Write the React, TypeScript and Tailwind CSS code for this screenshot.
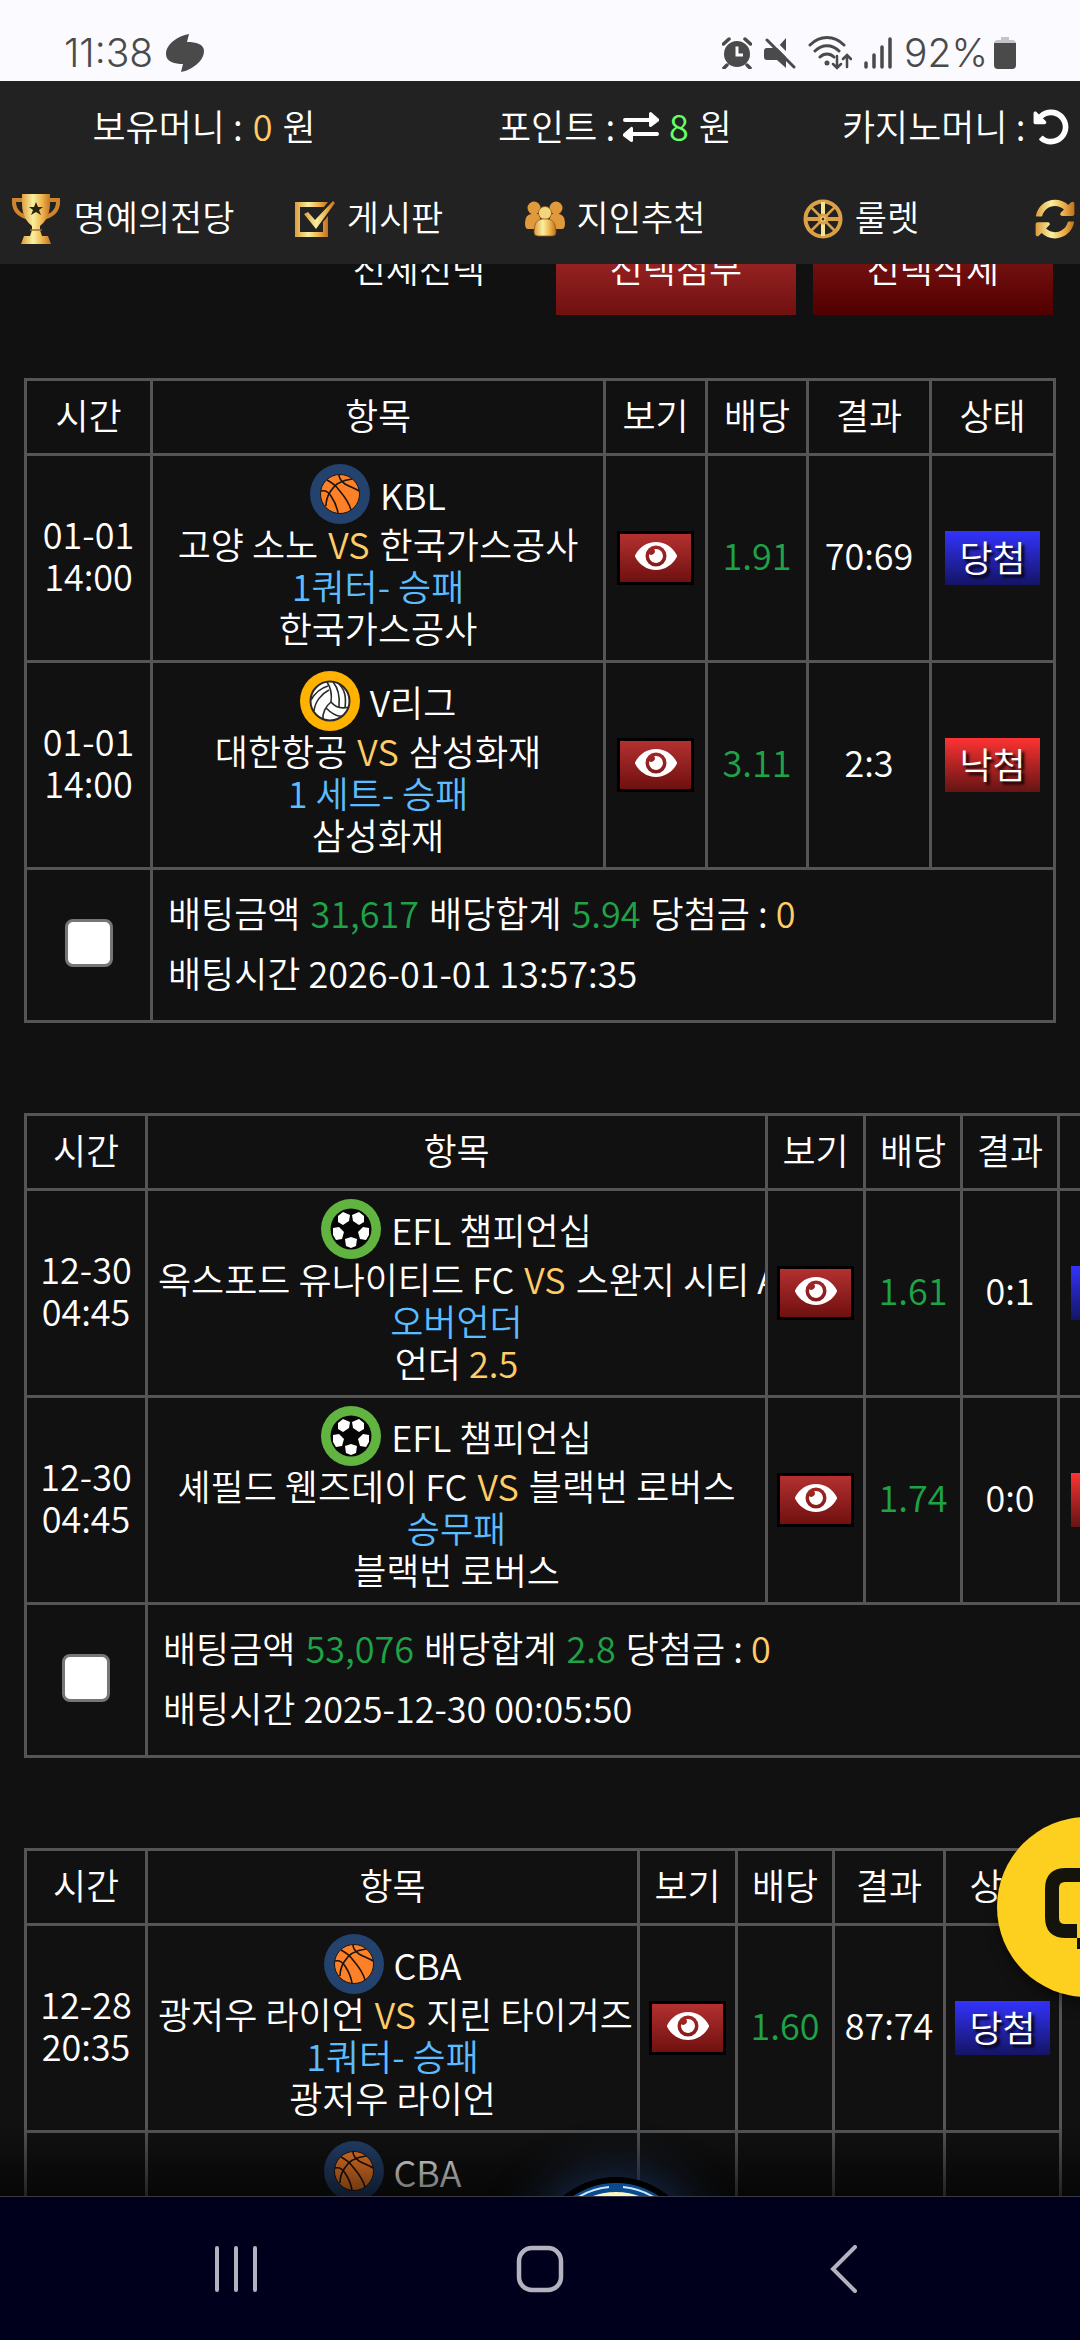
import { ReactNode } from 'react';
import { FaEye, FaUndoAlt, FaSyncAlt } from 'react-icons/fa';

type Sport = 'basketball' | 'volleyball' | 'soccer';

interface Bet {
  date: string;
  time: string;
  sport: Sport;
  league: string;
  home: string;
  away: string;
  market: string;
  pick: string;
  line?: string;
  odds: string;
  score: string;
  won: boolean;
}

interface Slip {
  id: string;
  cols: string[];
  width: string;
  bets: Bet[];
  amount: string;
  total: string;
  placedAt: string;
}

const slips: Slip[] = [
  {
    id: 'slip-1',
    width: 'w-full',
    cols: ['w-[126px]', '', 'w-[102px]', 'w-[101px]', 'w-[123px]', 'w-[124px]'],
    bets: [
      { date: '01-01', time: '14:00', sport: 'basketball', league: 'KBL', home: '고양 소노', away: '한국가스공사', market: '1쿼터- 승패', pick: '한국가스공사', odds: '1.91', score: '70:69', won: true },
      { date: '01-01', time: '14:00', sport: 'volleyball', league: 'V리그', home: '대한항공', away: '삼성화재', market: '1 세트- 승패', pick: '삼성화재', odds: '3.11', score: '2:3', won: false },
    ],
    amount: '31,617',
    total: '5.94',
    placedAt: '2026-01-01 13:57:35',
  },
  {
    id: 'slip-2',
    width: 'w-[1156px]',
    cols: ['w-[121px]', '', 'w-[98px]', 'w-[97px]', 'w-[97px]', 'w-[120px]'],
    bets: [
      { date: '12-30', time: '04:45', sport: 'soccer', league: 'EFL 챔피언십', home: '옥스포드 유나이티드 FC', away: '스완지 시티 AFC', market: '오버언더', pick: '언더', line: '2.5', odds: '1.61', score: '0:1', won: true },
      { date: '12-30', time: '04:45', sport: 'soccer', league: 'EFL 챔피언십', home: '셰필드 웬즈데이 FC', away: '블랙번 로버스', market: '승무패', pick: '블랙번 로버스', odds: '1.74', score: '0:0', won: false },
    ],
    amount: '53,076',
    total: '2.8',
    placedAt: '2025-12-30 00:05:50',
  },
  {
    id: 'slip-3',
    width: 'w-[1038px]',
    cols: ['w-[121px]', '', 'w-[98px]', 'w-[97px]', 'w-[111px]', 'w-[116px]'],
    bets: [
      { date: '12-28', time: '20:35', sport: 'basketball', league: 'CBA', home: '광저우 라이언', away: '지린 타이거즈', market: '1쿼터- 승패', pick: '광저우 라이언', odds: '1.60', score: '87:74', won: true },
      { date: '12-28', time: '20:35', sport: 'basketball', league: 'CBA', home: '광저우 라이언', away: '지린 타이거즈', market: '승패', pick: '광저우 라이언', odds: '1.60', score: '87:74', won: true },
    ],
    amount: '30,000',
    total: '2.56',
    placedAt: '2025-12-28 19:40:12',
  },
];

const headings = ['시간', '항목', '보기', '배당', '결과', '상태'];

const GoldGradient = () => (
  <svg width="0" height="0" className="absolute" aria-hidden="true">
    <defs>
      <linearGradient id="gold" x1="0" y1="0" x2="1" y2="0">
        <stop offset="0" stopColor="#dd9a3a" />
        <stop offset="0.4" stopColor="#f9f0a0" />
        <stop offset="0.7" stopColor="#efb54e" />
        <stop offset="1" stopColor="#c0701c" />
      </linearGradient>
    </defs>
  </svg>
);

const TrophyIcon = () => (
  <svg viewBox="0 0 50 50" className="size-[50px] shrink-0">
    <path d="M12 6H3q-1 14 15 18M38 6h9q1 14-15 18" fill="none" stroke="#d0852c" strokeWidth="4" />
    <path d="M11 0h28v10c0 11-5 18-10 22v4l2 6h6l3 8H10l3-8h6l2-6v-4C16 28 11 21 11 10z" fill="url(#gold)" />
    <path d="M25 8l2 5h5l-4 3 2 5-5-3-5 3 2-5-4-3h5z" fill="#2b2410" />
    <path d="M19 36h12" stroke="#a06a20" strokeWidth="1.500" />
  </svg>
);

const BoardIcon = () => (
  <svg viewBox="0 0 40 38" className="h-[38px] w-10 shrink-0" fill="url(#gold)">
    <path d="M0 2h33l-4 5H5v25h23V22l5-6v21H0z" />
    <path d="M9 14l4-2 7 8L38 1l2 2-19 26z" />
  </svg>
);

const FriendsIcon = () => (
  <svg viewBox="0 0 40 36" className="h-9 w-10 shrink-0">
    <g fill="#e09a3c">
      <circle cx="9" cy="7" r="6.500" />
      <circle cx="31" cy="7" r="6.500" />
      <path d="M0 22q0-8 6-9h8l4 15H3q-3 0-3-6zM40 22q0-8-6-9h-8l-4 15h15q3 0 3-6z" />
    </g>
    <circle cx="20" cy="12" r="6.500" fill="#f3d67c" stroke="#8a5a1c" strokeWidth="0.800" />
    <path d="M9 31q0-12 8-13h6q8 1 8 13 0 4-4 4H13q-4 0-4-4z" fill="url(#gold)" stroke="#8a5a1c" strokeWidth="0.800" />
  </svg>
);

const WheelIcon = () => (
  <svg viewBox="0 0 40 40" className="size-10 shrink-0" fill="none" stroke="#dba048">
    <circle cx="20" cy="20" r="17.500" strokeWidth="4" />
    <path d="M20 3v34" stroke="#f6e690" strokeWidth="4" />
    <path d="M3 20h34" strokeWidth="4" />
    <path d="M8 8l24 24M32 8L8 32" strokeWidth="2.500" />
    <circle cx="20" cy="20" r="4" fill="#f6e690" strokeWidth="3" />
    <circle cx="20" cy="20" r="1.500" fill="#4a3414" stroke="none" />
  </svg>
);

const SportIcon = ({ sport }: { sport: Sport }) => {
  if (sport === 'basketball') {
    return (
      <svg viewBox="0 0 60 60" className="size-15 shrink-0">
        <circle cx="30" cy="30" r="30" fill="#24426e" />
        <circle cx="30" cy="30" r="19.500" fill="#ff8127" stroke="#1a1410" strokeWidth="1" />
        <g fill="none" stroke="#1a1410" strokeWidth="1.600">
          <path d="M29 11c0 4 2 6 6 9 5 3 10 4 14 7" />
          <path d="M42 15c-9 1-17 4-22 13-3 5-4 10-4 14" />
          <path d="M17 16c4 2 9 6 12 10 6 7 10 12 12 20" />
          <path d="M11 27c4-1 7 0 10 5 4 6 6 11 7 17" />
        </g>
      </svg>
    );
  }
  if (sport === 'volleyball') {
    return (
      <svg viewBox="0 0 60 60" className="size-15 shrink-0">
        <circle cx="30" cy="30" r="30" fill="#ffb200" />
        <circle cx="30" cy="30" r="19.500" fill="#fff" stroke="#2a2a2a" strokeWidth="2" />
        <g fill="none" stroke="#2a2a2a" strokeWidth="1.600">
          <path d="M27 11c4 6 5 13 4 20" />
          <path d="M33 11c6 7 7 15 6 25" />
          <path d="M39 13c7 7 7 15 6 24" />
          <path d="M31 31c5 6 11 7 18 5" />
          <path d="M26 37c6 6 12 9 17 8" />
          <path d="M31 31c-5 4-9 11-8 18" />
          <path d="M29 19c-8 4-14 12-15 21" />
          <path d="M28 15c-7 2-13 7-17 14" />
        </g>
      </svg>
    );
  }
  return (
    <svg viewBox="0 0 60 60" className="size-15 shrink-0">
      <circle cx="30" cy="30" r="30" fill="#62b441" />
      <circle cx="30" cy="30" r="20.500" fill="#050505" />
      <g fill="#fff">
        <path d="M17 17l5-4 7 3-1 6-6 4-5-3z" />
        <path d="M43 17l-5-4-7 3 1 6 6 4 5-3z" />
        <path d="M12 29l6-1 5 5-2 7-6 1-3-5z" />
        <path d="M48 29l-6-1-5 5 2 7 6 1 3-5z" />
        <path d="M24 40l6-2 6 2-1 7-5 2-5-2z" />
      </g>
    </svg>
  );
};

const StatusBar = () => (
  <div className="flex h-[81px] shrink-0 items-center justify-between bg-[#fafaff] px-16 pt-6 font-[Inter,sans-serif] text-[39px] font-light text-[#4a4a4a]">
    <div className="flex items-center gap-3">
      <span>11:38</span>
      <svg viewBox="0 0 40 40" className="size-10" fill="#4a4a4a">
        <path d="M24 1C13 3 1 11 1 21c0 8 9 10 17 10l-2 8c11-2 23-11 23-21 0-7-8-9-17-9z" />
      </svg>
    </div>
    <div className="flex items-center gap-4">
      <svg viewBox="0 0 30 32" className="h-8 w-[30px]">
        <circle cx="15" cy="17" r="13" fill="#4a4a4a" />
        <path d="M1.500 7L7 2M28.500 7L23 2M5 28l-3 3M25 28l3 3" stroke="#4a4a4a" strokeWidth="3.500" strokeLinecap="round" />
        <path d="M15 9.500V18h6" fill="none" stroke="#fafaff" strokeWidth="3" />
      </svg>
      <svg viewBox="0 0 32 32" className="-ml-1 size-8">
        <path d="M22 1v30l-9-8H3q-3 0-3-3v-6q0-3 3-3h10z" fill="#4a4a4a" />
        <path d="M5 0l27 27" stroke="#fafaff" strokeWidth="4" />
        <path d="M3 3l27 27" stroke="#4a4a4a" strokeWidth="3" strokeLinecap="round" />
      </svg>
      <svg viewBox="0 0 44 34" className="-ml-1 h-[34px] w-11" fill="none" stroke="#4a4a4a" strokeWidth="3" strokeLinecap="round">
        <path d="M2 9c10-10 24-10 34 0M7 15c7-7 17-7 24 0M12 21c4-4 10-4 14 0" />
        <circle cx="19" cy="27" r="1" fill="#4a4a4a" />
        <path d="M29 20v11M25 28l4 4 4-4M39 31V20M35 23l4-4 4 4" strokeWidth="2.500" />
      </svg>
      <svg viewBox="0 0 28 32" className="-ml-1 h-8 w-7" stroke="#4a4a4a" strokeWidth="3.500" strokeLinecap="round">
        <path d="M2 26v4M10 18v12M18 10v20M26 2v28" />
      </svg>
      <div className="-ml-1 flex items-center gap-1.5">
        <span>92%</span>
        <svg viewBox="0 0 22 32" className="h-8 w-[22px]">
          <path d="M7 0h8v3h3q4 0 4 4H0q0-4 4-4h3z" fill="#c4c4c8" />
          <path d="M0 6h22v22q0 4-4 4H4q-4 0-4-4z" fill="#4a4a4a" />
        </svg>
      </div>
    </div>
  </div>
);

const MenuItem = ({ label, children }: { label: string; children: ReactNode }) => (
  <a href="#" className="flex w-[246px] shrink-0 items-center justify-center gap-3">
    {children}
    <span className="pb-1.5">{label}</span>
  </a>
);

const Header = () => (
  <header className="shrink-0 overflow-hidden bg-[#222] whitespace-nowrap">
    <div className="flex h-[92px] items-center">
      <div className="w-[408px] shrink-0 pb-1 text-center">
        보유머니 : <span className="mx-0.5 text-[#ffcc66]">0</span> 원
      </div>
      <div className="flex w-[414px] shrink-0 items-center justify-center">
        <span className="pb-1">포인트 :</span>
        <button type="button" aria-label="포인트 전환" className="mx-2">
          <svg viewBox="0 0 36 30" className="h-[30px] w-9" fill="#fff">
            <path d="M2 6h24V1q1-1 2-1l8 7q1 1 0 2l-8 6q-2 0-2-1v-4H2Q0 10 0 8t2-2zM34 20H10v-4q-1-2-2-1l-8 7q-1 1 0 2l8 6q2 0 2-1v-5h24q2 0 2-2t-2-2z" />
          </svg>
        </button>
        <span className="pb-1">
          <span className="mx-0.5 text-[#66ff66]">8</span> 원
        </span>
      </div>
      <div className="flex shrink-0 items-center pl-5">
        <span className="pb-1">카지노머니 :</span>
        <button type="button" aria-label="카지노머니 새로고침" className="mx-2">
          <FaUndoAlt className="size-9" />
        </button>
        <span className="pb-1 pl-3">
          <span className="mx-0.5 text-[#ffcc66]">0</span> 원
        </span>
      </div>
    </div>
    <nav className="flex h-[91px] items-center text-[35px]">
      <MenuItem label="명예의전당">
        <TrophyIcon />
      </MenuItem>
      <MenuItem label="게시판">
        <BoardIcon />
      </MenuItem>
      <MenuItem label="지인추천">
        <FriendsIcon />
      </MenuItem>
      <MenuItem label="룰렛">
        <WheelIcon />
      </MenuItem>
      <a href="#" aria-label="새로고침" className="shrink-0 pl-[51px]">
        <FaSyncAlt className="size-10" fill="url(#gold)" />
      </a>
    </nav>
  </header>
);

const BetTable = ({ slip }: { slip: Slip }) => (
  <table className={`${slip.width} table-fixed border-collapse text-center whitespace-nowrap [&_td]:border-3 [&_td]:border-[#555] [&_th]:border-3 [&_th]:border-[#555]`}>
    <colgroup>
      {slip.cols.map((c, i) => (
        <col key={i} className={c} />
      ))}
    </colgroup>
    <thead>
      <tr className="h-[75px]">
        {headings.map((h) => (
          <th key={h} className="p-0 pb-1.5 font-[350]">{h}</th>
        ))}
      </tr>
    </thead>
    <tbody>
      {slip.bets.map((bet, i) => (
        <tr key={i} className="h-[207px]">
          <td className="p-0 pb-2">
            {bet.date}
            <br />
            {bet.time}
          </td>
          <td className="overflow-hidden px-[10px] pt-[9px] pb-0 align-top">
            <div className="flex h-[57px] items-center justify-center gap-2.5">
              <SportIcon sport={bet.sport} />
              <span>{bet.league}</span>
            </div>
            <div>
              {bet.home} <span className="mx-0.5 text-[#ffcc66]">VS</span> {bet.away}
            </div>
            <div className="text-[#5bbcff]">{bet.market}</div>
            <div>
              {bet.pick} {bet.line && <span className="text-[#ffcc66]">{bet.line}</span>}
            </div>
          </td>
          <td className="p-0">
            <button type="button" aria-label="경기 보기" className="inline-flex h-[54px] w-[77px] items-center justify-center border-3 border-black bg-linear-to-b from-[#b43030] to-[#701010] pb-1 align-middle">
              <FaEye className="size-[42px]" />
            </button>
          </td>
          <td className="p-0 pb-2 text-[#1fa347]">{bet.odds}</td>
          <td className="p-0 pb-2">{bet.score}</td>
          <td className="p-0">
            <span className={`inline-flex h-[54px] w-[95px] items-center justify-center bg-linear-to-b pb-1 align-middle text-shadow-[3px_3px_3px_#000] ${bet.won ? 'from-[#3333ff] to-[#141466]' : 'from-[#ff3333] to-[#661414]'}`}>
              {bet.won ? '당첨' : '낙첨'}
            </span>
          </td>
        </tr>
      ))}
      <tr className="h-[153px]">
        <td className="p-0 pb-2">
          <input type="checkbox" aria-label="배팅 선택" className="size-12 appearance-none rounded-lg border-3 border-[#767676] bg-white align-middle" />
        </td>
        <td colSpan={5} className="px-[15px] pt-0 pb-1.5 text-left leading-[60px]">
          <div>
            배팅금액 <span className="mx-0.5 text-[#1fa347]">{slip.amount}</span> 배당합계 <span className="mx-0.5 text-[#1fa347]">{slip.total}</span> 당첨금 : <span className="text-[#ffcc66]">0</span>
          </div>
          <div>배팅시간 {slip.placedAt}</div>
        </td>
      </tr>
    </tbody>
  </table>
);

const SystemNav = () => (
  <div className="flex h-36 shrink-0 items-center border-t border-[#3a3a44] bg-[#00001c] px-[84px]">
    <button type="button" aria-label="최근 앱" className="flex flex-1 justify-center">
      <svg viewBox="0 0 42 46" className="h-[46px] w-[42px]" stroke="#b4b2bf" strokeWidth="4" strokeLinecap="round">
        <path d="M2 2v42M21 2v42M40 2v42" />
      </svg>
    </button>
    <button type="button" aria-label="홈" className="flex flex-1 justify-center">
      <svg viewBox="0 0 48 48" className="size-12" fill="none" stroke="#b4b2bf" strokeWidth="4.500">
        <rect x="3" y="3" width="42" height="42" rx="13" />
      </svg>
    </button>
    <button type="button" aria-label="뒤로" className="flex flex-1 justify-center">
      <svg viewBox="0 0 28 48" className="h-12 w-7" fill="none" stroke="#b4b2bf" strokeWidth="4" strokeLinecap="round">
        <path d="M25 2L3 24l22 22" />
      </svg>
    </button>
  </div>
);

const App = () => {
  return (
    <div className="flex h-screen flex-col overflow-hidden bg-[#111] font-['Noto_Sans_CJK_KR',sans-serif] text-[36px] leading-[42px] font-[350] text-white">
      <GoldGradient />
      <StatusBar />
      <Header />

      <main className="relative min-h-0 flex-1 overflow-hidden px-6">
        {/* Bulk actions, scrolled under the header */}
        <div className="-mt-[42px] flex justify-end gap-[17px] pr-[3px]">
          <button type="button" className="h-[93px] w-60 pb-1">전체선택</button>
          <button type="button" className="h-[93px] w-60 bg-linear-to-b from-[#b43030] to-[#701010] pb-1">선택첨부</button>
          <button type="button" className="h-[93px] w-60 bg-linear-to-b from-[#902020] to-[#500000] pb-1">선택삭제</button>
        </div>

        <div className="mt-[63px] flex flex-col gap-[90px]">
          {slips.map((slip) => (
            <BetTable key={slip.id} slip={slip} />
          ))}
        </div>

        {/* Fade above the system bar */}
        <div className="pointer-events-none absolute inset-x-0 bottom-0 h-18 bg-linear-to-b from-transparent to-black/60" />

        <button type="button" aria-label="메뉴" className="absolute -bottom-[147px] left-[57%] size-[166px] -translate-x-1/2 rounded-full border-6 border-black bg-[#0b4a8c] shadow-[0_0_50px_#1c3460]">
          <svg viewBox="0 0 154 154" className="size-full">
            <circle cx="77" cy="77" r="68" fill="#fdf8c0" />
            <path d="M6 60A73 73 0 0 1 70 4M84 4A73 73 0 0 1 148 60" fill="none" stroke="#cfeaff" strokeWidth="2" />
          </svg>
        </button>

        <button type="button" aria-label="상담 채팅" className="absolute right-[-97px] bottom-[199px] size-[180px] rounded-full bg-[#fdd020] pl-12 shadow-lg shadow-black/40">
          <svg viewBox="0 0 84 84" className="size-21" fill="#14140c">
            <path fillRule="evenodd" d="M21 3h42q21 0 21 21v28q0 21-21 21H50L32 87V73H21Q0 73 0 52V24Q0 3 21 3zM20 17q-6 0-6 6v30q0 6 6 6h12v14h12V59h20q6 0 6-6V23q0-6-6-6z" />
          </svg>
        </button>
      </main>

      <SystemNav />
    </div>
  );
};

export default App;
